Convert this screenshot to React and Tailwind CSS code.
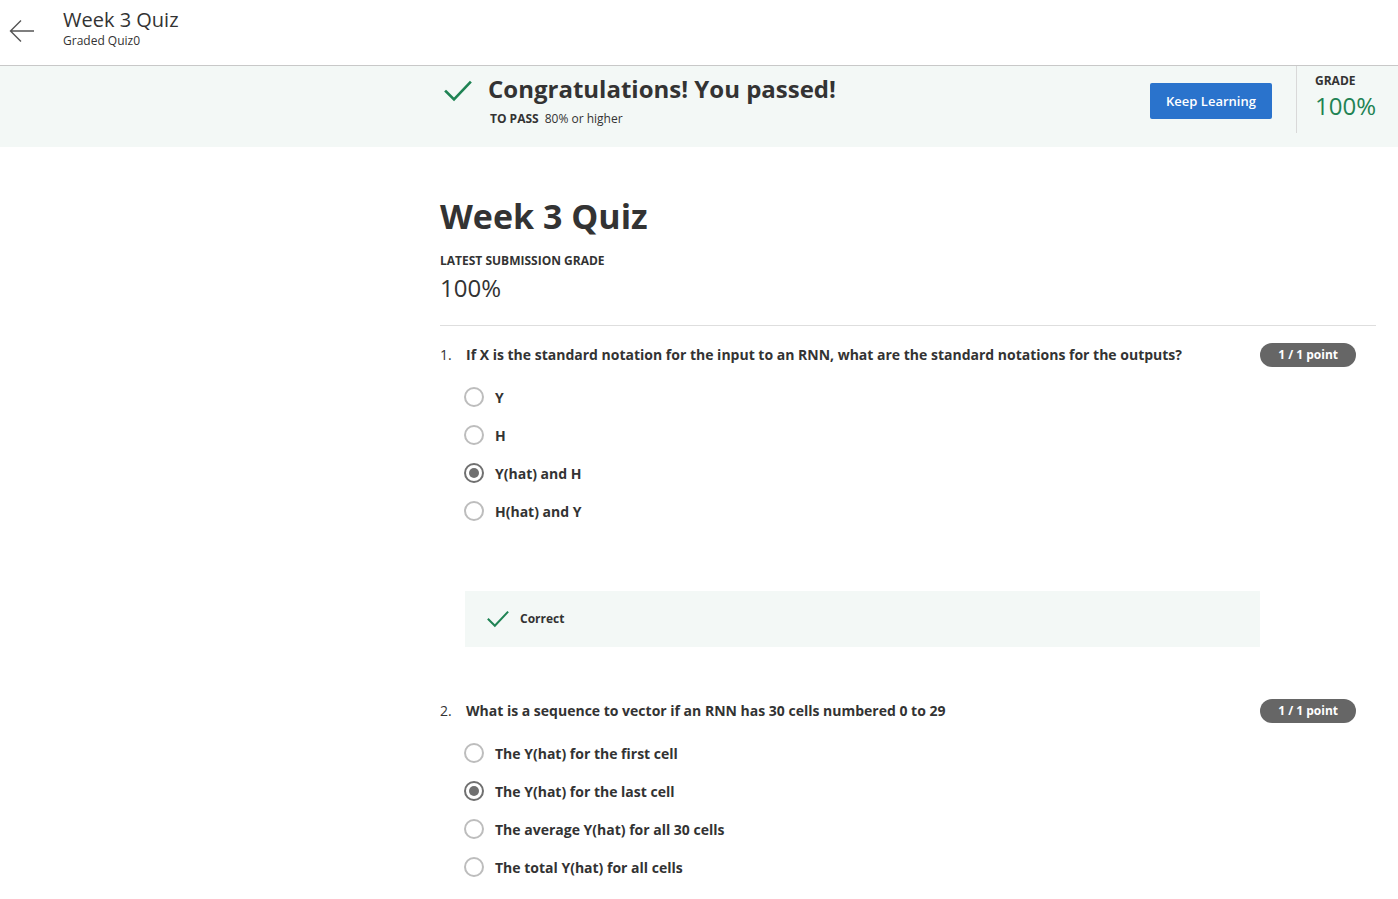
import React from 'react';

const font = { fontFamily: '"Open Sans", "Noto Sans", sans-serif' };

const Check = ({ className }) => (
  <svg viewBox="0 0 28 22" className={className} fill="none">
    <path d="M2 11.5 L10 19.5 L26 2.5" stroke="#1f8354" strokeWidth="2.6" strokeLinecap="square" />
  </svg>
);

const Radio = ({ checked }) => (
  <span className="w-5 h-5 rounded-full border-2 border-[#bdbdbd] flex items-center justify-center shrink-0 bg-white"
    style={checked ? { borderColor: '#707070' } : undefined}>
    {checked && <span className="w-[10px] h-[10px] rounded-full bg-[#707070]" />}
  </span>
);

const Question = ({ num, text, options, selected, children }) => (
  <div>
    <div className="flex items-start justify-between">
      <div className="flex text-[14px] leading-[20px] text-[#333] pt-[10px]">
        <span className="w-[26px]">{num}.</span>
        <span className="font-bold">{text}</span>
      </div>
      <span className="mr-[20px] mt-[8px] h-6 px-[18px] rounded-full bg-[#666] text-white text-[12px] font-bold flex items-center">
        1 / 1 point
      </span>
    </div>
    <div className="pl-6 mt-[20px] flex flex-col gap-[18px]">
      {options.map((o, i) => (
        <div key={o} className="flex items-center gap-[11px] h-5">
          <Radio checked={i === selected} />
          <span className="text-[14px] font-bold text-[#333]">{o}</span>
        </div>
      ))}
    </div>
    {children}
  </div>
);

export default function App() {
  return (
    <div className="min-h-screen bg-white text-[#333]" style={font}>
      {/* Header */}
      <div className="h-[66px] border-b border-[#c8c8c8] flex items-center">
        <svg viewBox="0 0 26 24" className="w-[26px] h-6 ml-[9px] mr-[28px] -mt-[4px]" fill="none" stroke="#555" strokeWidth="1.4">
          <path d="M25 12 H2 M12 1.5 L1.5 12 L12 22.5" />
        </svg>
        <div className="-mt-[9px]">
          <div className="text-[20px] leading-[26px] text-[#333]">Week 3 Quiz</div>
          <div className="text-[12px] leading-[16px] text-[#333]">Graded Quiz0</div>
        </div>
      </div>

      {/* Pass banner */}
      <div className="h-[81px] bg-[#f3f8f6] flex">
        <div className="ml-[440px] flex flex-1">
          <div className="flex pl-[4px] pt-[12px]">
            <Check className="w-[28px] h-[22px] mt-[2px]" />
            <div className="ml-[16px]">
              <div className="text-[24px] font-bold leading-[22px] text-[#333]">Congratulations! You passed!</div>
              <div className="text-[12px] mt-[10px] pl-[2px] text-[#333]">
                <span className="font-bold">TO PASS</span>
                <span className="ml-[6px]">80% or higher</span>
              </div>
            </div>
          </div>
          <div className="ml-auto flex">
            <button className="mt-[17px] h-9 w-[122px] pt-[2px] rounded-[2px] bg-[#2a73cc] text-white text-[13px] font-semibold">
              Keep Learning
            </button>
            <div className="ml-[24px] h-[67px] border-l border-[#d9d9d9] pl-[18px] pr-[22px] pt-[7px] flex flex-col gap-[2px]">
              <div className="text-[12px] font-bold leading-[16px] text-[#333]">GRADE</div>
              <div className="text-[24px] leading-[30px] text-[#1f8354]">100%</div>
            </div>
          </div>
        </div>
      </div>

      {/* Main */}
      <div className="ml-[440px] mr-[22px] pt-[47px]">
        <h1 className="text-[34px] font-bold leading-[44px] text-[#333]">Week 3 Quiz</h1>
        <div className="mt-[14px] text-[12px] font-bold text-[#333]">LATEST SUBMISSION GRADE</div>
        <div className="text-[24px] leading-[30px] mt-[3px] text-[#333]">100%</div>
        <div className="mt-[22px] border-t border-[#dedede]" />

        <div className="pt-[9px]">
          <Question
            num={1}
            text="If X is the standard notation for the input to an RNN, what are the standard notations for the outputs?"
            options={['Y', 'H', 'Y(hat) and H', 'H(hat) and Y']}
            selected={2}
          >
            <div className="ml-[25px] mr-[116px] mt-[70px] h-[56px] bg-[#f3f8f6] flex items-center pl-[22px]">
              <Check className="w-[22px] h-[18px]" />
              <span className="ml-[11px] text-[12px] font-bold text-[#333]">Correct</span>
            </div>
          </Question>
        </div>

        <div className="pt-[44px]">
          <Question
            num={2}
            text="What is a sequence to vector if an RNN has 30 cells numbered 0 to 29"
            options={['The Y(hat) for the first cell', 'The Y(hat) for the last cell', 'The average Y(hat) for all 30 cells', 'The total Y(hat) for all cells']}
            selected={1}
          />
        </div>
      </div>
    </div>
  );
}
